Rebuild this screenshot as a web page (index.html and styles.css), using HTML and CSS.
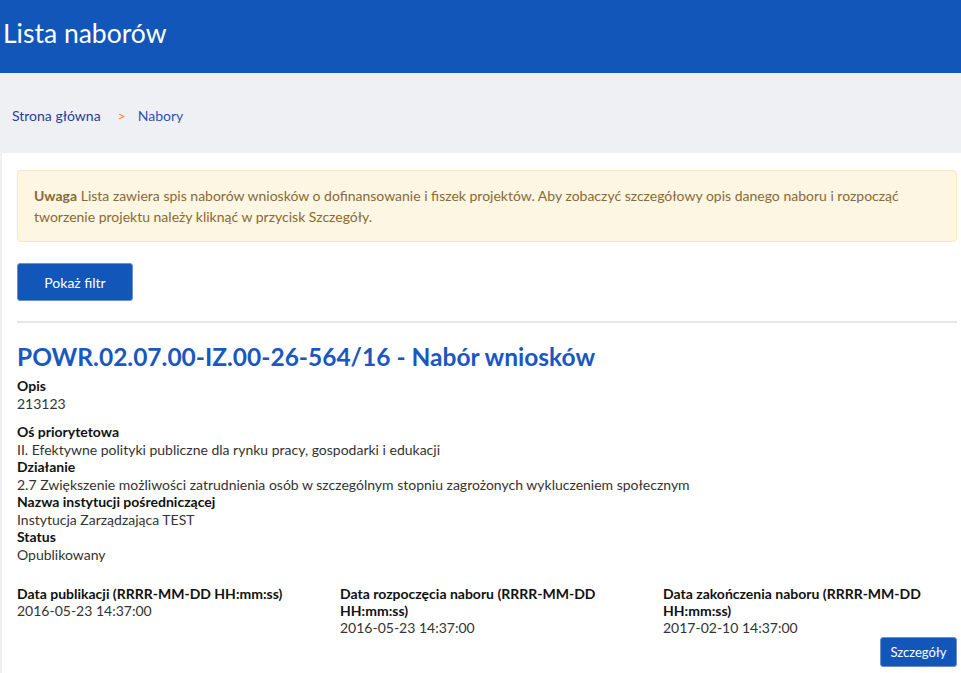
FILE: index.html
```html
<!DOCTYPE html>
<html lang="pl">
<head>
<meta charset="utf-8">
<title>Lista naborów</title>
<link rel="stylesheet" href="styles.css">
</head>
<body>
<header class="topbar">
  <h1 class="page-title">Lista naborów</h1>
</header>
<nav class="crumbs">
  <a class="crumb" href="#">Strona główna</a>
  <span class="crumb-sep">&gt;</span>
  <span class="crumb crumb-current">Nabory</span>
</nav>
<main class="content">
  <p class="alert"><strong>Uwaga</strong> Lista zawiera spis naborów wniosków o dofinansowanie i fiszek projektów. Aby zobaczyć szczegółowy opis danego naboru i rozpocząć tworzenie projektu należy kliknąć w przycisk Szczegóły.</p>
  <div class="filter-row">
    <button class="btn btn-filter" type="button">Pokaż filtr</button>
  </div>
  <hr class="divider">
  <section class="nabor">
    <h2 class="nabor-title">POWR.02.07.00-IZ.00-26-564/16 - Nabór wniosków</h2>
    <dl class="fields fields-first">
      <dt>Opis</dt>
      <dd>213123</dd>
    </dl>
    <dl class="fields">
      <dt>Oś priorytetowa</dt>
      <dd>II. Efektywne polityki publiczne dla rynku pracy, gospodarki i edukacji</dd>
      <dt>Działanie</dt>
      <dd>2.7 Zwiększenie możliwości zatrudnienia osób w szczególnym stopniu zagrożonych wykluczeniem społecznym</dd>
      <dt>Nazwa instytucji pośredniczącej</dt>
      <dd>Instytucja Zarządzająca TEST</dd>
      <dt>Status</dt>
      <dd>Opublikowany</dd>
    </dl>
    <div class="dates">
      <dl class="date-col">
        <dt>Data publikacji (RRRR-MM-DD HH:mm:ss)</dt>
        <dd>2016-05-23 14:37:00</dd>
      </dl>
      <dl class="date-col">
        <dt>Data rozpoczęcia naboru (RRRR-MM-DD HH:mm:ss)</dt>
        <dd>2016-05-23 14:37:00</dd>
      </dl>
      <dl class="date-col">
        <dt>Data zakończenia naboru (RRRR-MM-DD HH:mm:ss)</dt>
        <dd>2017-02-10 14:37:00</dd>
      </dl>
    </div>
    <div class="actions">
      <button class="btn btn-small" type="button">Szczegóły</button>
    </div>
  </section>
</main>
</body>
</html>
```
FILE: styles.css
```css
html, body {
  margin: 0;
  padding: 0;
}
body {
  font-family: Lato, "Open Sans", "Liberation Sans", sans-serif;
  font-size: 14px;
  color: #333;
  background: #eff0f4;
}
.topbar {
  background: #1356b9;
  height: 73px;
  display: flex;
  align-items: center;
  padding: 0 3px;
}
.page-title {
  margin: 0 0 8px 0;
  color: #fff;
  font-weight: 400;
  font-size: 26.5px;
}
.crumbs {
  height: 80px;
  display: flex;
  align-items: center;
  padding: 4px 12px 0 12px;
  box-sizing: border-box;
}
.crumb {
  color: #21429a;
  text-decoration: none;
}
.crumb-current {
  color: #2f53b8;
}
.crumb-sep {
  color: #f08a24;
  margin: 0 12px 0 17px;
}
.content {
  background: #fff;
  margin-left: 2px;
  padding: 17px 4px 20px 15px;
}
.alert {
  margin: 0;
  background: #fcf6e2;
  border: 1px solid #f8e9c3;
  border-radius: 4px;
  color: #8a6a35;
  padding: 14px 16px;
  line-height: 21px;
}
.alert strong {
  font-weight: 700;
}
.filter-row {
  margin-top: 21px;
}
.btn {
  font-family: inherit;
  background: #1356b9;
  color: #fff;
  border: 1px solid #6f8fcc;
  border-radius: 3px;
  cursor: pointer;
}
.btn-filter {
  width: 116px;
  height: 38px;
  font-size: 14px;
}
.divider {
  border: 0;
  height: 2px;
  background: #e6e6e6;
  margin: 20px 0 0 0;
}
.nabor-title {
  margin: 19px 0 5px 0;
  color: #1a57c0;
  font-size: 24.5px;
  font-weight: 700;
  line-height: 30px;
}
.fields {
  margin: 0;
  line-height: 17.5px;
}
.fields-first {
  margin-bottom: 11px;
}
.fields dt, .date-col dt {
  font-weight: 700;
  color: #111;
}
.fields dd, .date-col dd {
  margin: 0;
  color: #333;
}
.dates {
  display: grid;
  grid-template-columns: 323px 323px 1fr;
  margin-top: 22px;
  line-height: 17px;
}
.date-col {
  margin: 0;
  padding-right: 15px;
}
.actions {
  display: flex;
  justify-content: flex-end;
  margin-top: 1px;
}
.btn-small {
  width: 77px;
  height: 30px;
  font-size: 13px;
}
```
